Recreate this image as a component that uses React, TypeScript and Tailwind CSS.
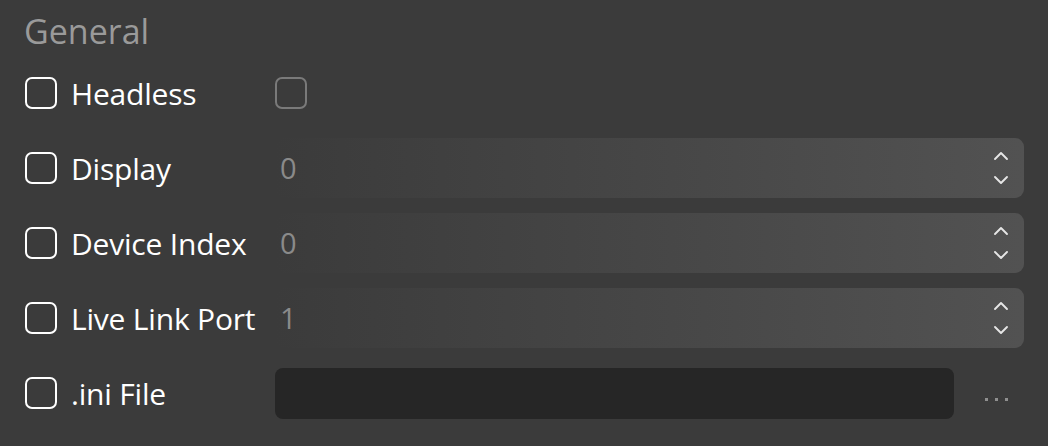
import { ChevronUp, ChevronDown } from "lucide-react";

const FONT = { fontFamily: '"Open Sans", "Noto Sans", sans-serif' };

const Check = ({ muted = false }: { muted?: boolean }) => (
  <div
    className={`w-[32px] h-[32px] rounded-[7px] border-2 shrink-0 ${
      muted ? "border-[#7a7a7a]" : "border-white"
    }`}
  />
);

const NumberBox = ({ value }: { value: string }) => (
  <div className="flex-1 h-[60px] rounded-[9px] bg-gradient-to-r from-[#3b3b3b] to-[#525252] flex items-center pl-[5px] pr-[11px]">
    <span className="text-[29px] text-[#8a8a8a] flex-1">{value}</span>
    <div className="flex flex-col items-center text-[#e6e6e6]">
      <ChevronUp size={24} strokeWidth={1.9} />
      <ChevronDown size={24} strokeWidth={1.9} />
    </div>
  </div>
);

const Row = ({ label, children }: { label: string; children: React.ReactNode }) => (
  <div className="flex items-center h-[60px]">
    <div className="w-[250px] flex items-center gap-[14px] shrink-0">
      <Check />
      <span className="text-[30px] text-white whitespace-nowrap tracking-[-0.2px]">{label}</span>
    </div>
    {children}
  </div>
);

export default function App() {
  return (
    <div className="w-[1048px] h-[446px] bg-[#3b3b3b] pl-[25px] pr-[24px] pt-[10px]" style={FONT}>
      <div className="text-[34px] leading-[42px] text-[#9a9a9a] mb-[11px] -ml-[1px]">General</div>
      <div className="flex flex-col gap-[15px]">
        <Row label="Headless">
          <Check muted />
        </Row>
        <Row label="Display">
          <NumberBox value="0" />
        </Row>
        <Row label="Device Index">
          <NumberBox value="0" />
        </Row>
        <Row label="Live Link Port">
          <NumberBox value="1" />
        </Row>
        <Row label=".ini File">
          <div className="flex-1 h-[51px] rounded-[8px] bg-[#262626]" />
          <div className="w-[70px] h-[51px] flex items-center justify-end pr-[16px] pt-[12px] gap-[7px]">
            <div className="w-[3px] h-[3px] bg-[#8f8f8f]" />
            <div className="w-[3px] h-[3px] bg-[#8f8f8f]" />
            <div className="w-[3px] h-[3px] bg-[#8f8f8f]" />
          </div>
        </Row>
      </div>
    </div>
  );
}
